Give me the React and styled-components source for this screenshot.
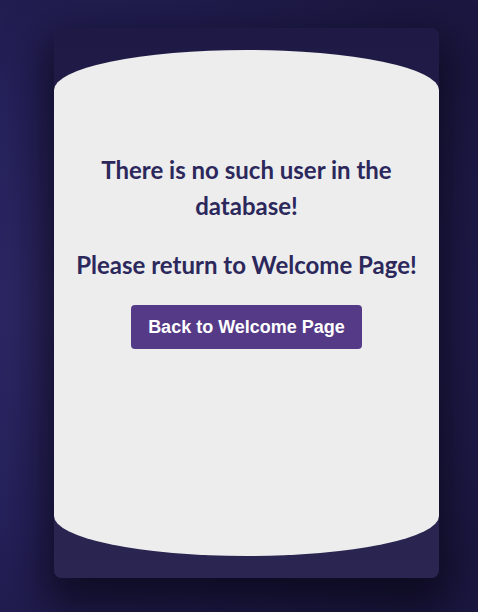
import React from 'react';
import styled, { createGlobalStyle } from 'styled-components';

const GlobalStyle = createGlobalStyle`
  html, body {
    margin: 0;
    padding: 0;
  }
  body {
    min-height: 612px;
    background: radial-gradient(ellipse 120% 70% at 0% 50%, #2c2763 0%, #25215a 50%, #1b1740 100%);
    font-family: "Lato", "Liberation Sans", sans-serif;
  }
`;

const Page = styled.main`
  padding: 28px 0 34px 54px;
`;

const Card = styled.section`
  width: 385px;
  height: 550px;
  box-sizing: border-box;
  padding: 22px 0;
  border-radius: 8px;
  background: linear-gradient(180deg, #1f1a45 0%, #2a2651 100%);
  box-shadow: 0 20px 40px 10px rgba(8, 6, 20, 0.7);
`;

const Bubble = styled.div`
  height: 100%;
  background: #ededed;
  border-radius: 50% / 40px;
  box-sizing: border-box;
  padding: 102px 16px 0;
  display: flex;
  flex-direction: column;
  align-items: center;
  text-align: center;
`;

const Message = styled.h2`
  margin: 0 0 ${(p) => p.$gap || 0}px;
  font-size: 24px;
  line-height: 36px;
  font-weight: 700;
  color: #2c285c;
`;

const BackButton = styled.button`
  margin-top: 22px;
  width: 231px;
  height: 44px;
  border: none;
  border-radius: 4px;
  background: #553a88;
  color: #fff;
  font-family: "Liberation Sans", Arial, sans-serif;
  font-weight: 700;
  font-size: 18px;
  cursor: pointer;
`;

export default function App() {
  return (
    <>
      <GlobalStyle />
      <Page>
        <Card>
          <Bubble>
            <Message $gap={23}>There is no such user in the database!</Message>
            <Message>Please return to Welcome Page!</Message>
            <BackButton>Back to Welcome Page</BackButton>
          </Bubble>
        </Card>
      </Page>
    </>
  );
}
